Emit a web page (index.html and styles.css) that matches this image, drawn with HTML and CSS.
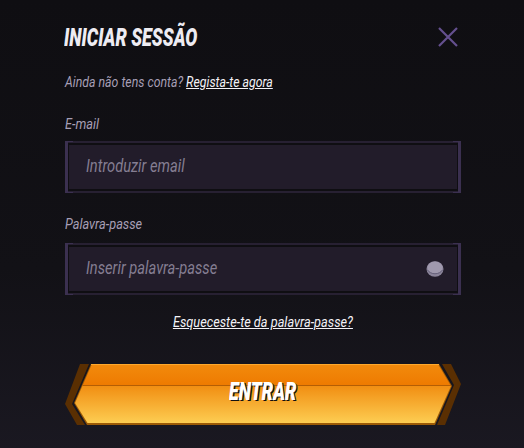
FILE: index.html
```html
<!DOCTYPE html>
<html lang="pt">
<head>
<meta charset="utf-8">
<title>Iniciar sessão</title>
<link rel="stylesheet" href="styles.css">
</head>
<body>
<main class="panel">
  <header class="head">
    <h1 class="title">INICIAR SESSÃO</h1>
    <svg class="close" viewBox="0 0 22 22" width="22" height="22"><path d="M2 2 20 20M20 2 2 20" fill="none" stroke="#65508f" stroke-width="2.200"/></svg>
  </header>
  <p class="signup"><span class="narrow signup-text">Ainda não tens conta? <a class="link" href="#">Regista-te agora</a></span></p>
  <div class="label first"><span class="narrow">E-mail</span></div>
  <div class="field"><div class="box"><span class="ph">Introduzir email</span></div></div>
  <div class="label second"><span class="narrow">Palavra-passe</span></div>
  <div class="field"><div class="box"><span class="ph">Inserir palavra-passe</span></div>
    <svg class="eye" viewBox="0 0 18 16" width="18" height="16"><ellipse cx="9" cy="8" rx="8.500" ry="7.800" fill="#8b849a"/><ellipse cx="9" cy="6.500" rx="7.500" ry="6" fill="#a099ae"/><path d="M1.500 9C4.500 14 13.500 14 16.500 9" fill="none" stroke="#66607a" stroke-width="1"/></svg>
  </div>
  <div class="forgot"><a class="link forgot-link" href="#">Esqueceste-te da palavra-passe?</a></div>
  <button class="enter" type="button">
    <svg class="enter-bg" viewBox="0 0 396 61" width="396" height="61">
      <defs>
        <linearGradient id="g" x1="0" y1="0" x2="0" y2="1">
          <stop offset="0" stop-color="#f28a0c"/>
          <stop offset=".36" stop-color="#ee7a00"/>
          <stop offset=".37" stop-color="#f18f13"/>
          <stop offset="1" stop-color="#fdcd52"/>
        </linearGradient>
      </defs>
      <path d="M15 0H24L7 40 20 61H12L0 40Z" fill="#5a2f02"/>
      <path d="M377 0H386L396 20 380 61H372L389 21Z" fill="#5a2f02"/>
      <path d="M26 0H374L387 22 370 61H22L9 39Z" fill="#9c5a06"/>
      <path d="M26.500 1H373.500L386 22 369.500 59H22.500L10 39Z" fill="url(#g)"/>
      <path d="M26 .5H374" stroke="#ffa92c" stroke-width="1"/>
      <path d="M18 21.500H386" stroke="#b45e04" stroke-width="1"/>
    </svg>
    <span class="enter-text">ENTRAR</span>
  </button>
</main>
</body>
</html>
```
FILE: styles.css
```css
* { box-sizing: border-box; }
html, body { margin: 0; height: 100%; }
body {
  width: 524px;
  height: 448px;
  overflow: hidden;
  background: linear-gradient(#0f0e12 0, #121116 60%, #1a1821 100%);
  font-family: "Roboto", sans-serif;
  font-style: italic;
}
.panel { width: 396px; margin-left: 65px; padding-top: 24px; }
.head { display: flex; justify-content: space-between; align-items: center; height: 26px; }
.title {
  margin: 0 0 0 -1px;
  font-size: 26px;
  line-height: 26px;
  font-weight: 900;
  color: #eeecf2;
  white-space: nowrap;
  transform: scaleX(.69);
  transform-origin: left center;
}
.close { margin-right: 2px; }
.narrow { display: inline-block; white-space: nowrap; transform: scaleX(.85); transform-origin: left center; }
.signup { margin: 23px 0 0 0; height: 18px; font-size: 15px; line-height: 18px; color: #a79fb6; }
.signup-text { transform: scaleX(.82); }
.link { color: #f4f2f7; text-decoration: underline; }
.label { font-size: 15px; line-height: 18px; height: 18px; color: #a79fb6; }
.label.first { margin-top: 24px; margin-bottom: 8px; }
.label.second { margin-top: 22px; margin-bottom: 10px; }
.field {
  position: relative;
  height: 52px;
  padding: 2px 4px;
  display: flex;
  border-top: 2px solid #272032;
  border-bottom: 2px solid #272032;
  background: #0f0e12;
}
.field::before, .field::after {
  content: "";
  position: absolute;
  top: -2px;
  bottom: -2px;
  width: 5px;
  border: solid #3b3050;
  border-width: 1px 0;
}
.field::before { left: 0; border-left-width: 3px; }
.field::after { right: 0; border-right-width: 3px; }
.box {
  flex: 1;
  display: flex;
  align-items: center;
  padding: 0 0 3px 17px;
  background: #221c2a;
}
.ph {
  display: inline-block;
  white-space: nowrap;
  font-size: 18px;
  color: #857e92;
  transform: scaleX(.815);
  transform-origin: left center;
}
.eye { position: absolute; right: 17px; top: 16px; }
.forgot { margin-top: 18px; height: 18px; text-align: center; font-size: 15px; line-height: 18px; }
.forgot-link { display: inline-block; transform: scaleX(.85); }
.enter {
  position: relative;
  display: flex;
  align-items: center;
  justify-content: center;
  width: 396px;
  height: 61px;
  margin-top: 33px;
  padding: 0 0 8px;
  border: 0;
  background: none;
}
.enter-bg { position: absolute; left: 0; top: 0; }
.enter-text {
  position: relative;
  font: italic 900 26px "Roboto", sans-serif;
  color: #fff;
  text-shadow: 2px 1px 0 #111;
  transform: scaleX(.69);
}
```
